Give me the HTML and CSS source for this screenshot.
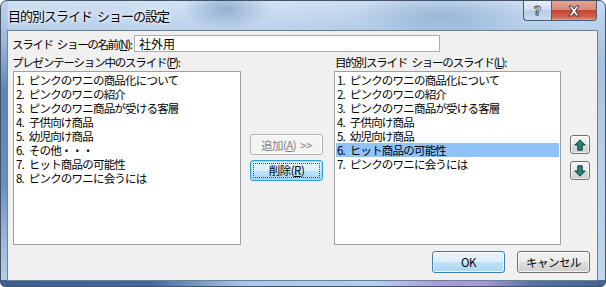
FILE: index.html
```html
<!DOCTYPE html>
<html>
<head lang="ja">
    <meta charset="UTF-8">
    <title>目的別スライド ショーの設定</title>
    <link rel="stylesheet" href="styles.css">
</head>
<body>

    <div class="window">
        <div class="titlebar">
            <span class="title">目的別スライド ショーの設定</span>
            <div class="caption-buttons">
                <span class="cap-btn help">?</span>
                <span class="cap-btn close">
                    <svg width="14" height="12" viewBox="0 0 14 12">
                        <path d="M2 1 L5 1 L7 4 L9 1 L12 1 L8.6 6 L12 11 L9 11 L7 8 L5 11 L2 11 L5.4 6 Z" fill="#fff" stroke="#3b3b3b" stroke-width="1" stroke-linejoin="round"/>
                    </svg>
                </span>
            </div>
        </div>

        <div class="client">
            <div class="name-row">
                <span class="name-label">スライド ショーの名前(<u>N</u>):</span>
                <div class="textbox">社外用</div>
            </div>

            <div class="lists">
                <div class="col col-left">
                    <div class="caption">プレゼンテーション中のスライド(<u>P</u>):</div>
                    <ul class="listbox">
                        <li>1. ピンクのワニの商品化について</li>
                        <li>2. ピンクのワニの紹介</li>
                        <li>3. ピンクのワニ商品が受ける客層</li>
                        <li>4. 子供向け商品</li>
                        <li>5. 幼児向け商品</li>
                        <li>6. その他・・・</li>
                        <li>7. ヒット商品の可能性</li>
                        <li>8. ピンクのワニに会うには</li>
                    </ul>
                </div>

                <div class="mid">
                    <button class="btn" disabled>追加(<u>A</u>) &gt;&gt;</button>
                    <button class="btn btn-focus"><span class="focus-rect">削除(<u>R</u>)</span></button>
                </div>

                <div class="col col-right">
                    <div class="caption">目的別スライド ショーのスライド(<u>L</u>):</div>
                    <ul class="listbox">
                        <li>1. ピンクのワニの商品化について</li>
                        <li>2. ピンクのワニの紹介</li>
                        <li>3. ピンクのワニ商品が受ける客層</li>
                        <li>4. 子供向け商品</li>
                        <li>5. 幼児向け商品</li>
                        <li class="selected">6. ヒット商品の可能性</li>
                        <li>7. ピンクのワニに会うには</li>
                    </ul>
                </div>

                <div class="arrows">
                    <button class="btn arrow-btn">
                        <svg width="12" height="12" viewBox="0 0 12 12">
                            <path d="M6 0.8 L11.2 6 L8.2 6 L8.2 11.2 L3.8 11.2 L3.8 6 L0.8 6 Z" fill="#20867c" stroke="#0f3f3a" stroke-width="1" stroke-linejoin="round"/>
                        </svg>
                    </button>
                    <button class="btn arrow-btn">
                        <svg width="12" height="12" viewBox="0 0 12 12">
                            <path d="M6 11.2 L11.2 6 L8.2 6 L8.2 0.8 L3.8 0.8 L3.8 6 L0.8 6 Z" fill="#20867c" stroke="#0f3f3a" stroke-width="1" stroke-linejoin="round"/>
                        </svg>
                    </button>
                </div>
            </div>

            <div class="footer">
                <button class="btn btn-default">OK</button>
                <button class="btn">キャンセル</button>
            </div>
        </div>
    </div>

</body>
</html>
```

FILE: styles.css
```css
* {
    padding: 0;
    margin: 0;
    list-style: none;
}
body {
    background: #fff;
    font-family: "Noto Sans CJK JP", "Noto Sans", sans-serif;
    font-size: 11.5px;
    color: #000;
}
u {
    text-decoration: underline;
    text-underline-offset: 1px;
}
.window {
    width: 606px;
    height: 287px;
    box-sizing: border-box;
    border: 1px solid #43546a;
    border-radius: 7px 7px 5px 5px;
    padding: 0 7px 5px 6px;
    display: flex;
    flex-direction: column;
    overflow: hidden;
    background:
        linear-gradient(to right, #3d5f8c 0, #46699a 25%, #a9c9ea 40%, #b3d0ee 62%, #a79fd9 72%, #a39ad6 80%, #53749f 88%, #44658f 100%) bottom / 100% 6px no-repeat,
        linear-gradient(to bottom, #bcd3ea 0, #9db9da 40px, #5f84b2 90px, #6a8dba 180px, #9bb8da 240px, #b9d0ea 100%) left / 7px 100% no-repeat,
        linear-gradient(to bottom, #c6daee 0, #a6c2e2 60px, #b7cfe9 150px, #c3d7ed 100%) right / 8px 100% no-repeat,
        radial-gradient(ellipse 45px 22px at 225px 8px, rgba(80, 120, 175, 0.45), rgba(80, 120, 175, 0)),
        radial-gradient(ellipse 90px 22px at 440px 14px, rgba(80, 120, 175, 0.3), rgba(80, 120, 175, 0)),
        linear-gradient(to bottom, rgba(255, 255, 255, 0.35), rgba(255, 255, 255, 0) 30px),
        linear-gradient(to right, #b4cde7, #bcd4ec 40%, #aac6e5 75%, #b8d0ea);
}
.titlebar {
    height: 29px;
    display: flex;
    justify-content: space-between;
    align-items: flex-start;
}
.title {
    margin: 6px 0 0 1px;
    font-size: 13px;
    line-height: 17px;
    letter-spacing: -1px;
    word-spacing: 3px;
    white-space: nowrap;
    text-shadow: 0 0 6px rgba(255, 255, 255, 0.9), 0 0 3px rgba(255, 255, 255, 0.9);
}
.caption-buttons {
    display: flex;
    margin-right: 1px;
}
.cap-btn {
    height: 20px;
    box-sizing: border-box;
    border: 1px solid #4f5f72;
    border-top: none;
    display: flex;
    align-items: center;
    justify-content: center;
}
.help {
    width: 28px;
    border-right: none;
    border-radius: 0 0 0 4px;
    background: linear-gradient(#e6eef7 0, #d2e0ef 45%, #b9cde3 50%, #c7d9ec 100%);
    color: #fff;
    font-family: "DejaVu Sans", sans-serif;
    font-weight: bold;
    font-size: 13px;
    -webkit-text-stroke: 0.8px #3b3b3b;
}
.close {
    width: 46px;
    border-radius: 0 0 4px 0;
    background: linear-gradient(#e4a493 0, #d98a78 45%, #c6452f 50%, #d2644f 85%, #e59a82 100%);
}
.client {
    flex: 1;
    border: 1px solid #6d7f93;
    background: #f0f0f0;
    padding: 4px 6px 0 5px;
    display: flex;
    flex-direction: column;
}
.name-row {
    display: flex;
    align-items: center;
    height: 17px;
}
.name-label {
    flex: none;
    width: 122px;
    margin-left: -1px;
    letter-spacing: -1.35px;
    word-spacing: 3px;
    white-space: nowrap;
}
.textbox {
    width: 306px;
    height: 17px;
    box-sizing: border-box;
    border: 1px solid #abadb3;
    background: #fff;
    padding-left: 4px;
    font-size: 12px;
    line-height: 15px;
}
.lists {
    display: flex;
    margin-top: 4px;
}
.caption {
    height: 13px;
    line-height: 13px;
    margin-left: -1px;
    letter-spacing: -1.2px;
    word-spacing: 3px;
    white-space: nowrap;
}
.listbox {
    margin-top: 2px;
    height: 174px;
    box-sizing: border-box;
    border: 1px solid #a0a0a0;
    background: #fff;
    padding-top: 1px;
}
.listbox li {
    height: 14px;
    line-height: 14px;
    margin: 0 1px;
    padding-left: 1px;
    letter-spacing: -0.8px;
    word-spacing: 3px;
    white-space: nowrap;
}
.listbox li.selected {
    background-color: #90c3f8;
}
.col-left .listbox {
    width: 228px;
}
.col-right .listbox {
    width: 227px;
}
.col-right .caption {
    margin-left: 1px;
}
.mid {
    width: 73px;
    margin: 0 11px 0 9px;
    padding-top: 78px;
    display: flex;
    flex-direction: column;
    gap: 5px;
}
.btn {
    box-sizing: border-box;
    height: 21px;
    border: 1px solid #707070;
    border-radius: 3px;
    background: linear-gradient(#f2f2f2 0, #ebebeb 50%, #dddddd 50%, #cfcfcf 100%);
    font-family: "Noto Sans CJK JP", "Noto Sans", sans-serif;
    font-size: 11.5px;
    letter-spacing: -0.5px;
    word-spacing: 2px;
    color: #000;
    box-shadow: inset 0 0 0 1px rgba(255, 255, 255, 0.7);
}
.btn:disabled {
    border-color: #adb2b5;
    background: #f4f4f4;
    color: #838383;
}
.btn-focus {
    border-color: #2c9fd9;
    background: linear-gradient(#e9f6fd 0, #daf0fc 50%, #bde5fa 50%, #a6d8f3 100%);
    box-shadow: inset 0 0 0 1px #9fdcf8;
    padding: 2px;
}
.focus-rect {
    display: block;
    height: 100%;
    box-sizing: border-box;
    border: 1px dotted #8a2a1a;
    line-height: 13px;
}
.btn-default {
    border-color: #3c7fb1;
    background: linear-gradient(#e8f4fc 0, #dbeefa 50%, #c1e2f6 50%, #acd6f2 100%);
    box-shadow: inset 0 0 0 1px rgba(255, 255, 255, 0.8);
}
.arrows {
    margin-left: 9px;
    padding-top: 79px;
    display: flex;
    flex-direction: column;
    gap: 7px;
}
.arrow-btn {
    width: 20px;
    height: 19px;
    display: flex;
    align-items: center;
    justify-content: center;
}
.footer {
    margin-top: 6px;
    display: flex;
    justify-content: flex-end;
    gap: 12px;
    padding-right: 1px;
}
.footer .btn {
    width: 73px;
    height: 22px;
}
```
